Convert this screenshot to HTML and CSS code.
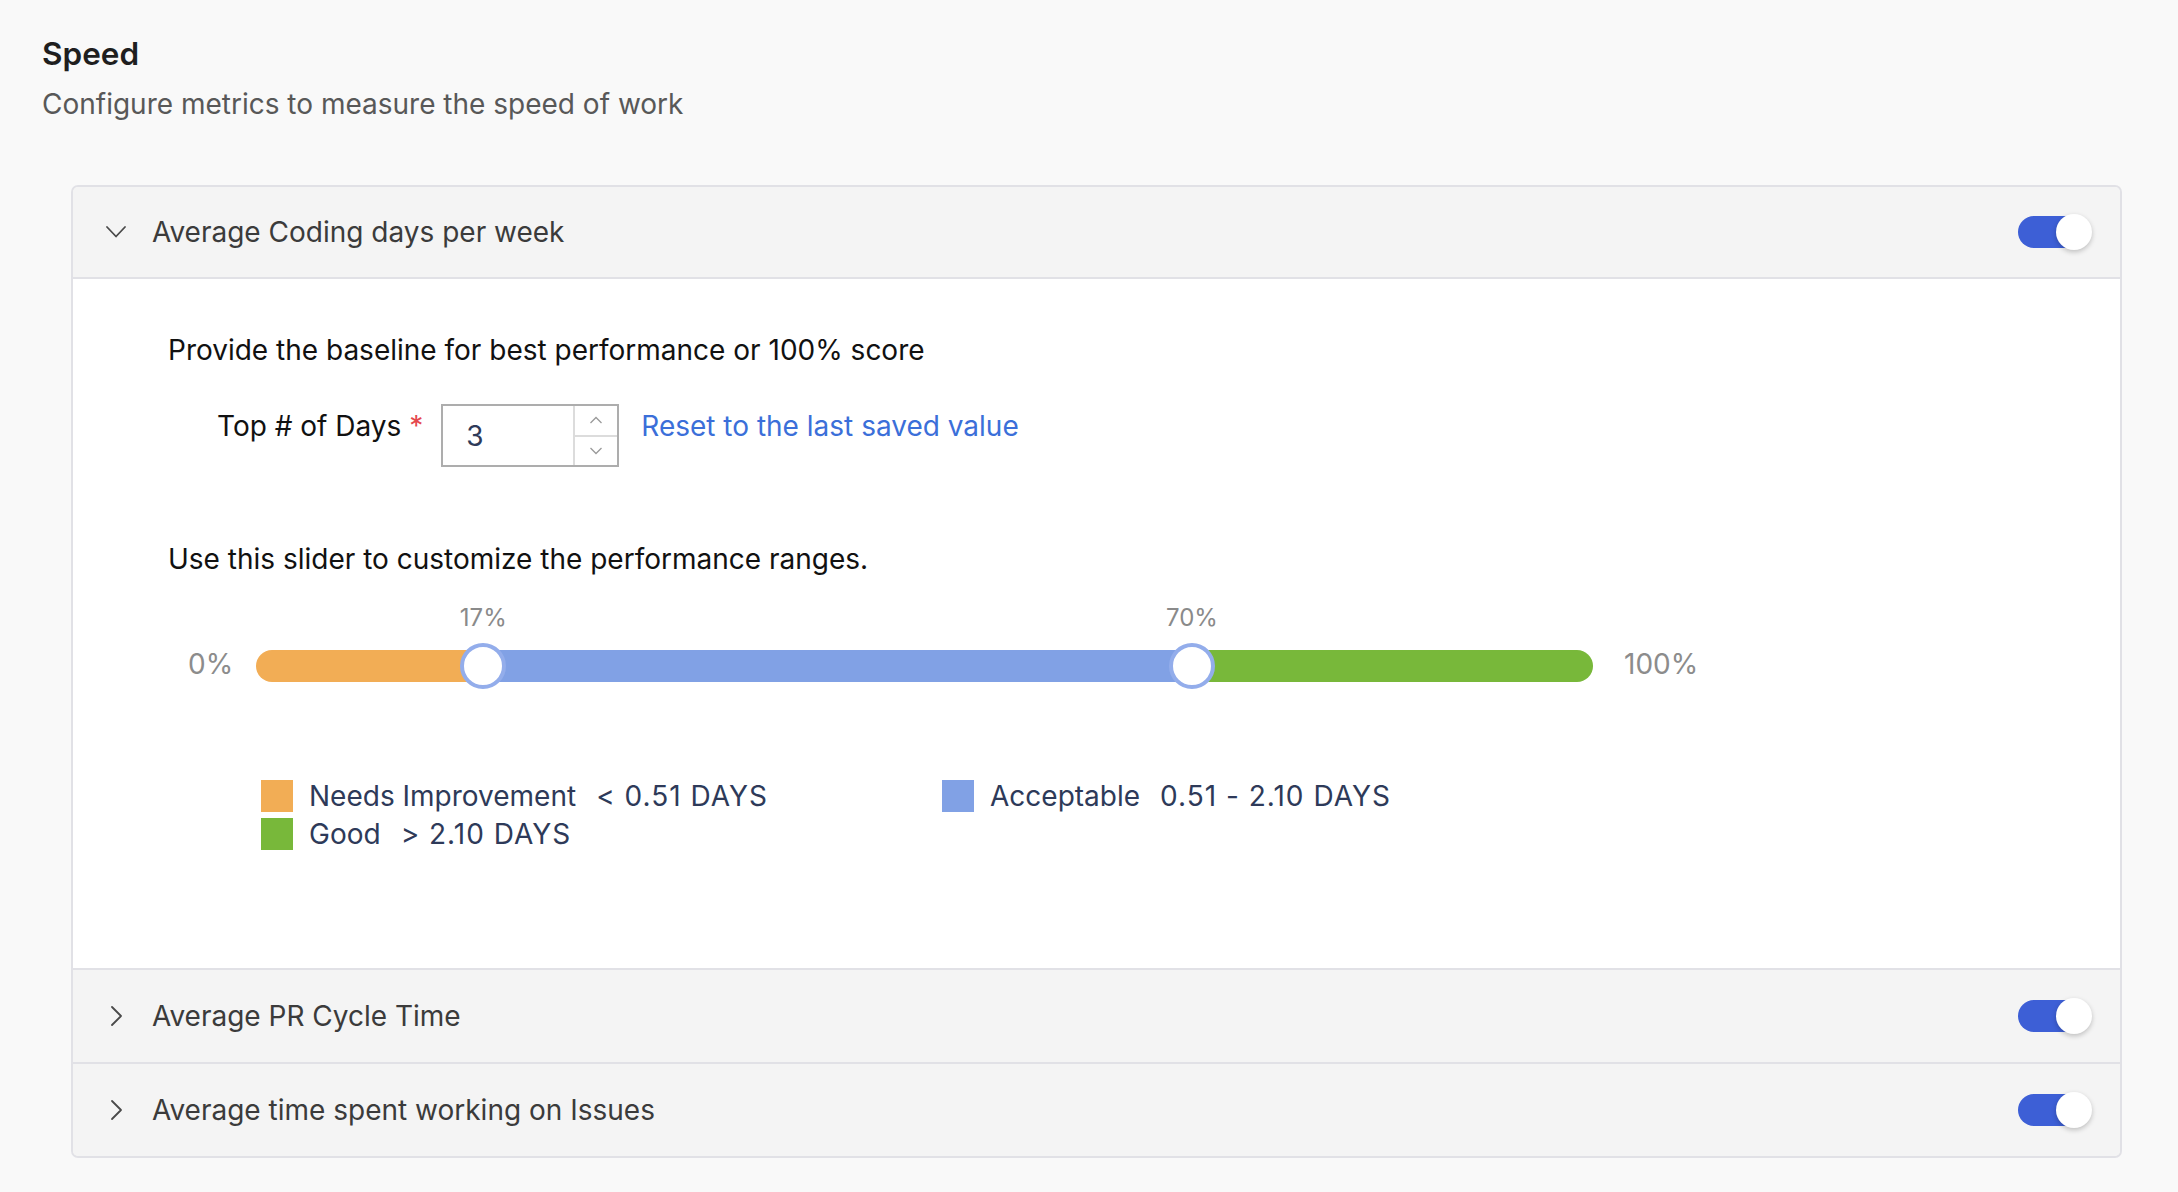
FILE: index.html
```html
<!DOCTYPE html>
<html lang="en">
<head>
<meta charset="utf-8">
<title>Speed</title>
<link rel="stylesheet" href="styles.css">
</head>
<body>
<div class="page">
  <h1 class="title">Speed</h1>
  <p class="subtitle">Configure metrics to measure the speed of work</p>

  <div class="card">
    <div class="row-head open">
      <span class="chev"><svg width="22" height="14" viewBox="0 0 22 14"><path d="M2 2 L11 11.5 L20 2" fill="none" stroke="#4a4a4a" stroke-width="1.8" stroke-linecap="round" stroke-linejoin="round"/></svg></span>
      <span class="row-title">Average Coding days per week</span>
      <span class="switch"><span class="knob"></span></span>
    </div>

    <div class="row-body">
      <p class="intro">Provide the baseline for best performance or 100% score</p>

      <div class="field">
        <span class="field-label">Top # of Days <span class="req">*</span></span>
        <div class="num-input">
          <span class="num-value">3</span>
          <div class="stepper">
            <span class="step"><svg width="14" height="8" viewBox="0 0 14 8"><path d="M1.5 7 L7 1.5 L12.5 7" fill="none" stroke="#9a9a9a" stroke-width="1.3"/></svg></span>
            <span class="step step-down"><svg width="14" height="8" viewBox="0 0 14 8"><path d="M1.5 1 L7 6.5 L12.5 1" fill="none" stroke="#9a9a9a" stroke-width="1.3"/></svg></span>
          </div>
        </div>
        <a class="reset" href="#">Reset to the last saved value</a>
      </div>

      <p class="intro slider-intro">Use this slider to customize the performance ranges.</p>

      <div class="slider">
        <span class="edge edge-left">0%</span>
        <div class="track">
          <div class="bar">
            <span class="seg seg-orange" style="width:17%"></span>
            <span class="seg seg-blue" style="width:53%"></span>
            <span class="seg seg-green" style="width:30%"></span>
          </div>
          <span class="mark" style="left:17%">17%</span>
          <span class="mark" style="left:70%">70%</span>
          <span class="thumb" style="left:17%"></span>
          <span class="thumb" style="left:70%"></span>
        </div>
        <span class="edge edge-right">100%</span>
      </div>

      <div class="legend">
        <div class="legend-item"><span class="swatch sw-orange"></span><span class="legend-name">Needs Improvement</span><span class="legend-value">&lt; 0.51 DAYS</span></div>
        <div class="legend-item"><span class="swatch sw-blue"></span><span class="legend-name">Acceptable</span><span class="legend-value">0.51 - 2.10 DAYS</span></div>
        <div class="legend-item"><span class="swatch sw-green"></span><span class="legend-name">Good</span><span class="legend-value">&gt; 2.10 DAYS</span></div>
      </div>
    </div>

    <div class="row-head">
      <span class="chev"><svg width="14" height="22" viewBox="0 0 14 22"><path d="M3 2 L12 11 L3 20" fill="none" stroke="#4a4a4a" stroke-width="1.8" stroke-linecap="round" stroke-linejoin="round"/></svg></span>
      <span class="row-title">Average PR Cycle Time</span>
      <span class="switch"><span class="knob"></span></span>
    </div>

    <div class="row-head last">
      <span class="chev"><svg width="14" height="22" viewBox="0 0 14 22"><path d="M3 2 L12 11 L3 20" fill="none" stroke="#4a4a4a" stroke-width="1.8" stroke-linecap="round" stroke-linejoin="round"/></svg></span>
      <span class="row-title">Average time spent working on Issues</span>
      <span class="switch"><span class="knob"></span></span>
    </div>
  </div>
</div>
</body>
</html>
```

FILE: styles.css
```css
* { box-sizing: border-box; }

html, body {
  margin: 0;
  background: #f9f9f9;
  font-family: Inter, "Noto Sans", "Liberation Sans", sans-serif;
}

.page {
  padding: 36px 56px 30px 42px;
}

.title {
  margin: 0;
  font-size: 31.5px;
  line-height: 36px;
  font-weight: 600;
  color: #1f1f1f;
}

.subtitle {
  margin: 12px 0 0;
  font-size: 28px;
  line-height: 40px;
  color: #585858;
}

.card {
  margin: 61px 0 0 29px;
  border: 2px solid #e1e1e6;
  border-radius: 7px;
  background: #f4f4f4;
  overflow: hidden;
}

.row-head {
  display: flex;
  align-items: center;
  height: 94px;
  padding: 0 36px 0 31px;
  background: #f4f4f4;
  border-bottom: 2px solid #e1e1e6;
}

.row-head.open { height: 92px; }
.row-head.last { border-bottom: none; height: 92px; }

.chev {
  width: 24px;
  height: 24px;
  display: flex;
  align-items: center;
  justify-content: center;
  flex: none;
}

.row-title {
  margin-left: 24px;
  font-size: 28px;
  line-height: 36px;
  color: #3b3b3b;
}

.switch {
  position: relative;
  margin-left: auto;
  width: 66px;
  height: 32px;
  border-radius: 16px;
  background: #3d5fd6;
  flex: none;
}

.knob {
  position: absolute;
  top: -2px;
  right: -8px;
  width: 36px;
  height: 36px;
  border-radius: 50%;
  background: #ffffff;
  box-shadow: 0 2px 5px rgba(0, 0, 0, 0.22);
}

.row-body {
  background: #ffffff;
  border-bottom: 2px solid #e1e1e6;
  padding: 53px 0 118px 95px;
}

.intro {
  margin: 0;
  font-size: 28px;
  line-height: 36px;
  color: #111111;
}

.field {
  display: flex;
  align-items: flex-start;
  margin-top: 36px;
  padding-left: 49px;
}

.field-label {
  padding-top: 4px;
  font-size: 28px;
  line-height: 36px;
  color: #111111;
  margin-right: 18px;
}

.req { color: #e5484d; }

.num-input {
  display: flex;
  width: 178px;
  height: 63px;
  border: 2px solid #adadad;
  background: #ffffff;
}

.num-value {
  flex: 1;
  display: flex;
  align-items: center;
  padding-left: 23px;
  font-size: 28px;
  color: #2e3a59;
}

.stepper {
  width: 44px;
  display: flex;
  flex-direction: column;
  border-left: 2px solid #dcdcdc;
}

.step {
  flex: 1;
  display: flex;
  align-items: center;
  justify-content: center;
}

.step-down { border-top: 2px solid #dcdcdc; }

.reset {
  margin-left: 22px;
  padding-top: 4px;
  font-size: 28px;
  line-height: 36px;
  color: #3b6fd9;
  text-decoration: none;
}

.slider-intro { margin-top: 74px; }

.slider {
  display: flex;
  align-items: center;
  margin-top: 71px;
  padding-left: 20px;
}

.edge {
  font-size: 28px;
  line-height: 32px;
  padding-bottom: 4px;
  color: #8c8c8c;
}

.edge-left { width: 68px; flex: none; }
.edge-right { margin-left: 31px; }

.track {
  position: relative;
  width: 1337px;
  height: 32px;
  flex: none;
}

.bar {
  display: flex;
  height: 32px;
  border-radius: 16px;
  overflow: hidden;
}

.seg { display: block; height: 100%; }
.seg-orange { background: #f2ad55; }
.seg-blue { background: #81a1e5; }
.seg-green { background: #78b83a; }

.mark {
  position: absolute;
  top: -47px;
  transform: translateX(-50%);
  font-size: 24px;
  line-height: 30px;
  color: #8a8a8a;
}

.thumb {
  position: absolute;
  top: -7px;
  width: 46px;
  height: 46px;
  margin-left: -23px;
  border-radius: 50%;
  background: #ffffff;
  border: 4px solid #93adeb;
}

.legend {
  display: grid;
  grid-template-columns: 681px 681px;
  row-gap: 6px;
  margin-top: 96px;
  margin-left: 93px;
}

.legend-item {
  display: flex;
  align-items: center;
  height: 32px;
}

.swatch {
  width: 32px;
  height: 32px;
  flex: none;
}

.sw-orange { background: #f2ad55; }
.sw-blue { background: #81a1e5; }
.sw-green { background: #78b83a; }

.legend-name,
.legend-value {
  font-size: 28px;
  line-height: 32px;
  color: #2e3a59;
}

.legend-name { margin-left: 16px; }
.legend-value { margin-left: 20px; letter-spacing: 1px; }
```
